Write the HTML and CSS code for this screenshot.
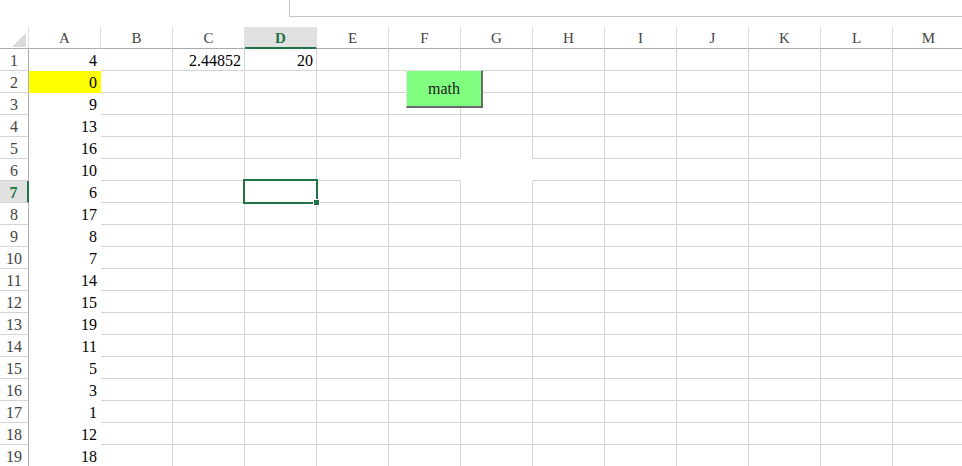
FILE: index.html
```html
<!DOCTYPE html>
<html lang="zh-Hant">
<head>
  <meta charset="UTF-8" />
  <title>Hoja1</title>
  <link rel="stylesheet" href="styles.css">
</head>
<body>

  <div class="barra">
    <div class="barra-formula"></div>
  </div>

  <div class="hoja">
    <div class="fila enc">
      <div class="esquina"><span class="triangulo"></span></div>
      <div class="col">A</div><div class="col">B</div><div class="col">C</div><div class="col activa">D</div>
      <div class="col">E</div><div class="col">F</div><div class="col">G</div><div class="col">H</div>
      <div class="col">I</div><div class="col">J</div><div class="col">K</div><div class="col">L</div><div class="col">M</div>
    </div>

    <div class="fila"><div class="n">1</div><div class="c a">4</div><div class="c"></div><div class="c">2.44852</div><div class="c">20</div><div class="c"></div><div class="c"></div><div class="c"></div><div class="c"></div><div class="c"></div><div class="c"></div><div class="c"></div><div class="c"></div><div class="c"></div></div>
    <div class="fila"><div class="n">2</div><div class="c a amarillo">0</div><div class="c"></div><div class="c"></div><div class="c"></div><div class="c"></div><div class="c"></div><div class="c"></div><div class="c"></div><div class="c"></div><div class="c"></div><div class="c"></div><div class="c"></div><div class="c"></div></div>
    <div class="fila"><div class="n">3</div><div class="c a">9</div><div class="c"></div><div class="c"></div><div class="c"></div><div class="c"></div><div class="c"></div><div class="c"></div><div class="c"></div><div class="c"></div><div class="c"></div><div class="c"></div><div class="c"></div><div class="c"></div></div>
    <div class="fila"><div class="n">4</div><div class="c a">13</div><div class="c"></div><div class="c"></div><div class="c"></div><div class="c"></div><div class="c"></div><div class="c"></div><div class="c"></div><div class="c"></div><div class="c"></div><div class="c"></div><div class="c"></div><div class="c"></div></div>
    <div class="fila"><div class="n">5</div><div class="c a">16</div><div class="c"></div><div class="c"></div><div class="c"></div><div class="c"></div><div class="c"></div><div class="c sin-inf"></div><div class="c"></div><div class="c"></div><div class="c"></div><div class="c"></div><div class="c"></div><div class="c"></div></div>
    <div class="fila"><div class="n">6</div><div class="c a">10</div><div class="c"></div><div class="c"></div><div class="c"></div><div class="c"></div><div class="c sin-der"></div><div class="c blanca"></div><div class="c"></div><div class="c"></div><div class="c"></div><div class="c"></div><div class="c"></div><div class="c"></div></div>
    <div class="fila"><div class="n activa">7</div><div class="c a">6</div><div class="c"></div><div class="c"></div><div class="c"></div><div class="c"></div><div class="c"></div><div class="c"></div><div class="c"></div><div class="c"></div><div class="c"></div><div class="c"></div><div class="c"></div><div class="c"></div></div>
    <div class="fila"><div class="n">8</div><div class="c a">17</div><div class="c"></div><div class="c"></div><div class="c"></div><div class="c"></div><div class="c"></div><div class="c"></div><div class="c"></div><div class="c"></div><div class="c"></div><div class="c"></div><div class="c"></div><div class="c"></div></div>
    <div class="fila"><div class="n">9</div><div class="c a">8</div><div class="c"></div><div class="c"></div><div class="c"></div><div class="c"></div><div class="c"></div><div class="c"></div><div class="c"></div><div class="c"></div><div class="c"></div><div class="c"></div><div class="c"></div><div class="c"></div></div>
    <div class="fila"><div class="n">10</div><div class="c a">7</div><div class="c"></div><div class="c"></div><div class="c"></div><div class="c"></div><div class="c"></div><div class="c"></div><div class="c"></div><div class="c"></div><div class="c"></div><div class="c"></div><div class="c"></div><div class="c"></div></div>
    <div class="fila"><div class="n">11</div><div class="c a">14</div><div class="c"></div><div class="c"></div><div class="c"></div><div class="c"></div><div class="c"></div><div class="c"></div><div class="c"></div><div class="c"></div><div class="c"></div><div class="c"></div><div class="c"></div><div class="c"></div></div>
    <div class="fila"><div class="n">12</div><div class="c a">15</div><div class="c"></div><div class="c"></div><div class="c"></div><div class="c"></div><div class="c"></div><div class="c"></div><div class="c"></div><div class="c"></div><div class="c"></div><div class="c"></div><div class="c"></div><div class="c"></div></div>
    <div class="fila"><div class="n">13</div><div class="c a">19</div><div class="c"></div><div class="c"></div><div class="c"></div><div class="c"></div><div class="c"></div><div class="c"></div><div class="c"></div><div class="c"></div><div class="c"></div><div class="c"></div><div class="c"></div><div class="c"></div></div>
    <div class="fila"><div class="n">14</div><div class="c a">11</div><div class="c"></div><div class="c"></div><div class="c"></div><div class="c"></div><div class="c"></div><div class="c"></div><div class="c"></div><div class="c"></div><div class="c"></div><div class="c"></div><div class="c"></div><div class="c"></div></div>
    <div class="fila"><div class="n">15</div><div class="c a">5</div><div class="c"></div><div class="c"></div><div class="c"></div><div class="c"></div><div class="c"></div><div class="c"></div><div class="c"></div><div class="c"></div><div class="c"></div><div class="c"></div><div class="c"></div><div class="c"></div></div>
    <div class="fila"><div class="n">16</div><div class="c a">3</div><div class="c"></div><div class="c"></div><div class="c"></div><div class="c"></div><div class="c"></div><div class="c"></div><div class="c"></div><div class="c"></div><div class="c"></div><div class="c"></div><div class="c"></div><div class="c"></div></div>
    <div class="fila"><div class="n">17</div><div class="c a">1</div><div class="c"></div><div class="c"></div><div class="c"></div><div class="c"></div><div class="c"></div><div class="c"></div><div class="c"></div><div class="c"></div><div class="c"></div><div class="c"></div><div class="c"></div><div class="c"></div></div>
    <div class="fila"><div class="n">18</div><div class="c a">12</div><div class="c"></div><div class="c"></div><div class="c"></div><div class="c"></div><div class="c"></div><div class="c"></div><div class="c"></div><div class="c"></div><div class="c"></div><div class="c"></div><div class="c"></div><div class="c"></div></div>
    <div class="fila"><div class="n">19</div><div class="c a">18</div><div class="c"></div><div class="c"></div><div class="c"></div><div class="c"></div><div class="c"></div><div class="c"></div><div class="c"></div><div class="c"></div><div class="c"></div><div class="c"></div><div class="c"></div><div class="c"></div></div>

    <!-- celda activa D7 -->
    <div class="seleccion"><span class="tirador"></span></div>

    <button class="boton-math">math</button>
  </div>

</body>
</html>
```

FILE: styles.css
```css
body {
  margin: 0;
  padding: 0;
  font-family: "Liberation Serif", serif;
  background: #fff;
  width: 962px;
  height: 466px;
  overflow: hidden;
}

.barra {
  height: 27px;
}

.barra-formula {
  margin-left: 289px;
  height: 17px;
  box-sizing: border-box;
  border-left: 1px solid #c6c6c6;
  border-bottom: 1px solid #c6c6c6;
}

.hoja {
  position: relative;
  width: 965px;
}

.fila {
  display: grid;
  grid-template-columns: 29px repeat(13, 72px);
  height: 22px;
}

.fila > div {
  box-sizing: border-box;
  border-right: 1px solid #d4d4d4;
  border-bottom: 1px solid #d4d4d4;
  font-size: 16px;
  line-height: 22px;
  white-space: nowrap;
  overflow: hidden;
}

/* encabezados */
.enc > div {
  border-right-color: #dedede;
  border-bottom-color: #ababab;
  text-align: center;
  color: #444;
  font-size: 15px;
  line-height: 23px;
}

.esquina {
  position: relative;
}

.triangulo {
  position: absolute;
  right: 2px;
  bottom: 1px;
  width: 0;
  height: 0;
  border-left: 14px solid transparent;
  border-bottom: 14px solid #dadada;
}

.enc .activa {
  background: #e1e1e1;
  color: #217346;
  font-weight: bold;
  border-bottom: 2px solid #217346;
}

.fila .n {
  text-align: center;
  color: #444;
  border-right-color: #ababab;
  line-height: 24px;
}

.fila .n.activa {
  background: #e1e1e1;
  color: #217346;
  font-weight: bold;
  border-right: 2px solid #217346;
}

.c {
  text-align: right;
  padding-right: 3px;
  line-height: 24px !important;
}

/* relleno blanco tapa las lineas */
.c.a,
.c.blanca {
  border-color: transparent !important;
}

.c.amarillo {
  background: #ffff00;
}

.c.sin-der {
  border-right-color: transparent !important;
}

.c.sin-inf {
  border-bottom-color: transparent !important;
}

.seleccion {
  position: absolute;
  left: 243px;
  top: 152px;
  width: 75px;
  height: 25px;
  box-sizing: border-box;
  border: 2px solid #217346;
}

.tirador {
  position: absolute;
  right: -4px;
  bottom: -4px;
  width: 5px;
  height: 5px;
  background: #217346;
  border: 1px solid #fff;
}

.boton-math {
  position: absolute;
  left: 406px;
  top: 43px;
  width: 77px;
  height: 38px;
  box-sizing: border-box;
  margin: 0;
  padding: 0;
  background: #80ff80;
  border-top: 1px solid #e3e3e3;
  border-left: 1px solid #e3e3e3;
  border-right: 2px solid #696969;
  border-bottom: 2px solid #696969;
  border-radius: 0;
  font-family: "Liberation Serif", serif;
  font-size: 16px;
  color: #222;
}
```
